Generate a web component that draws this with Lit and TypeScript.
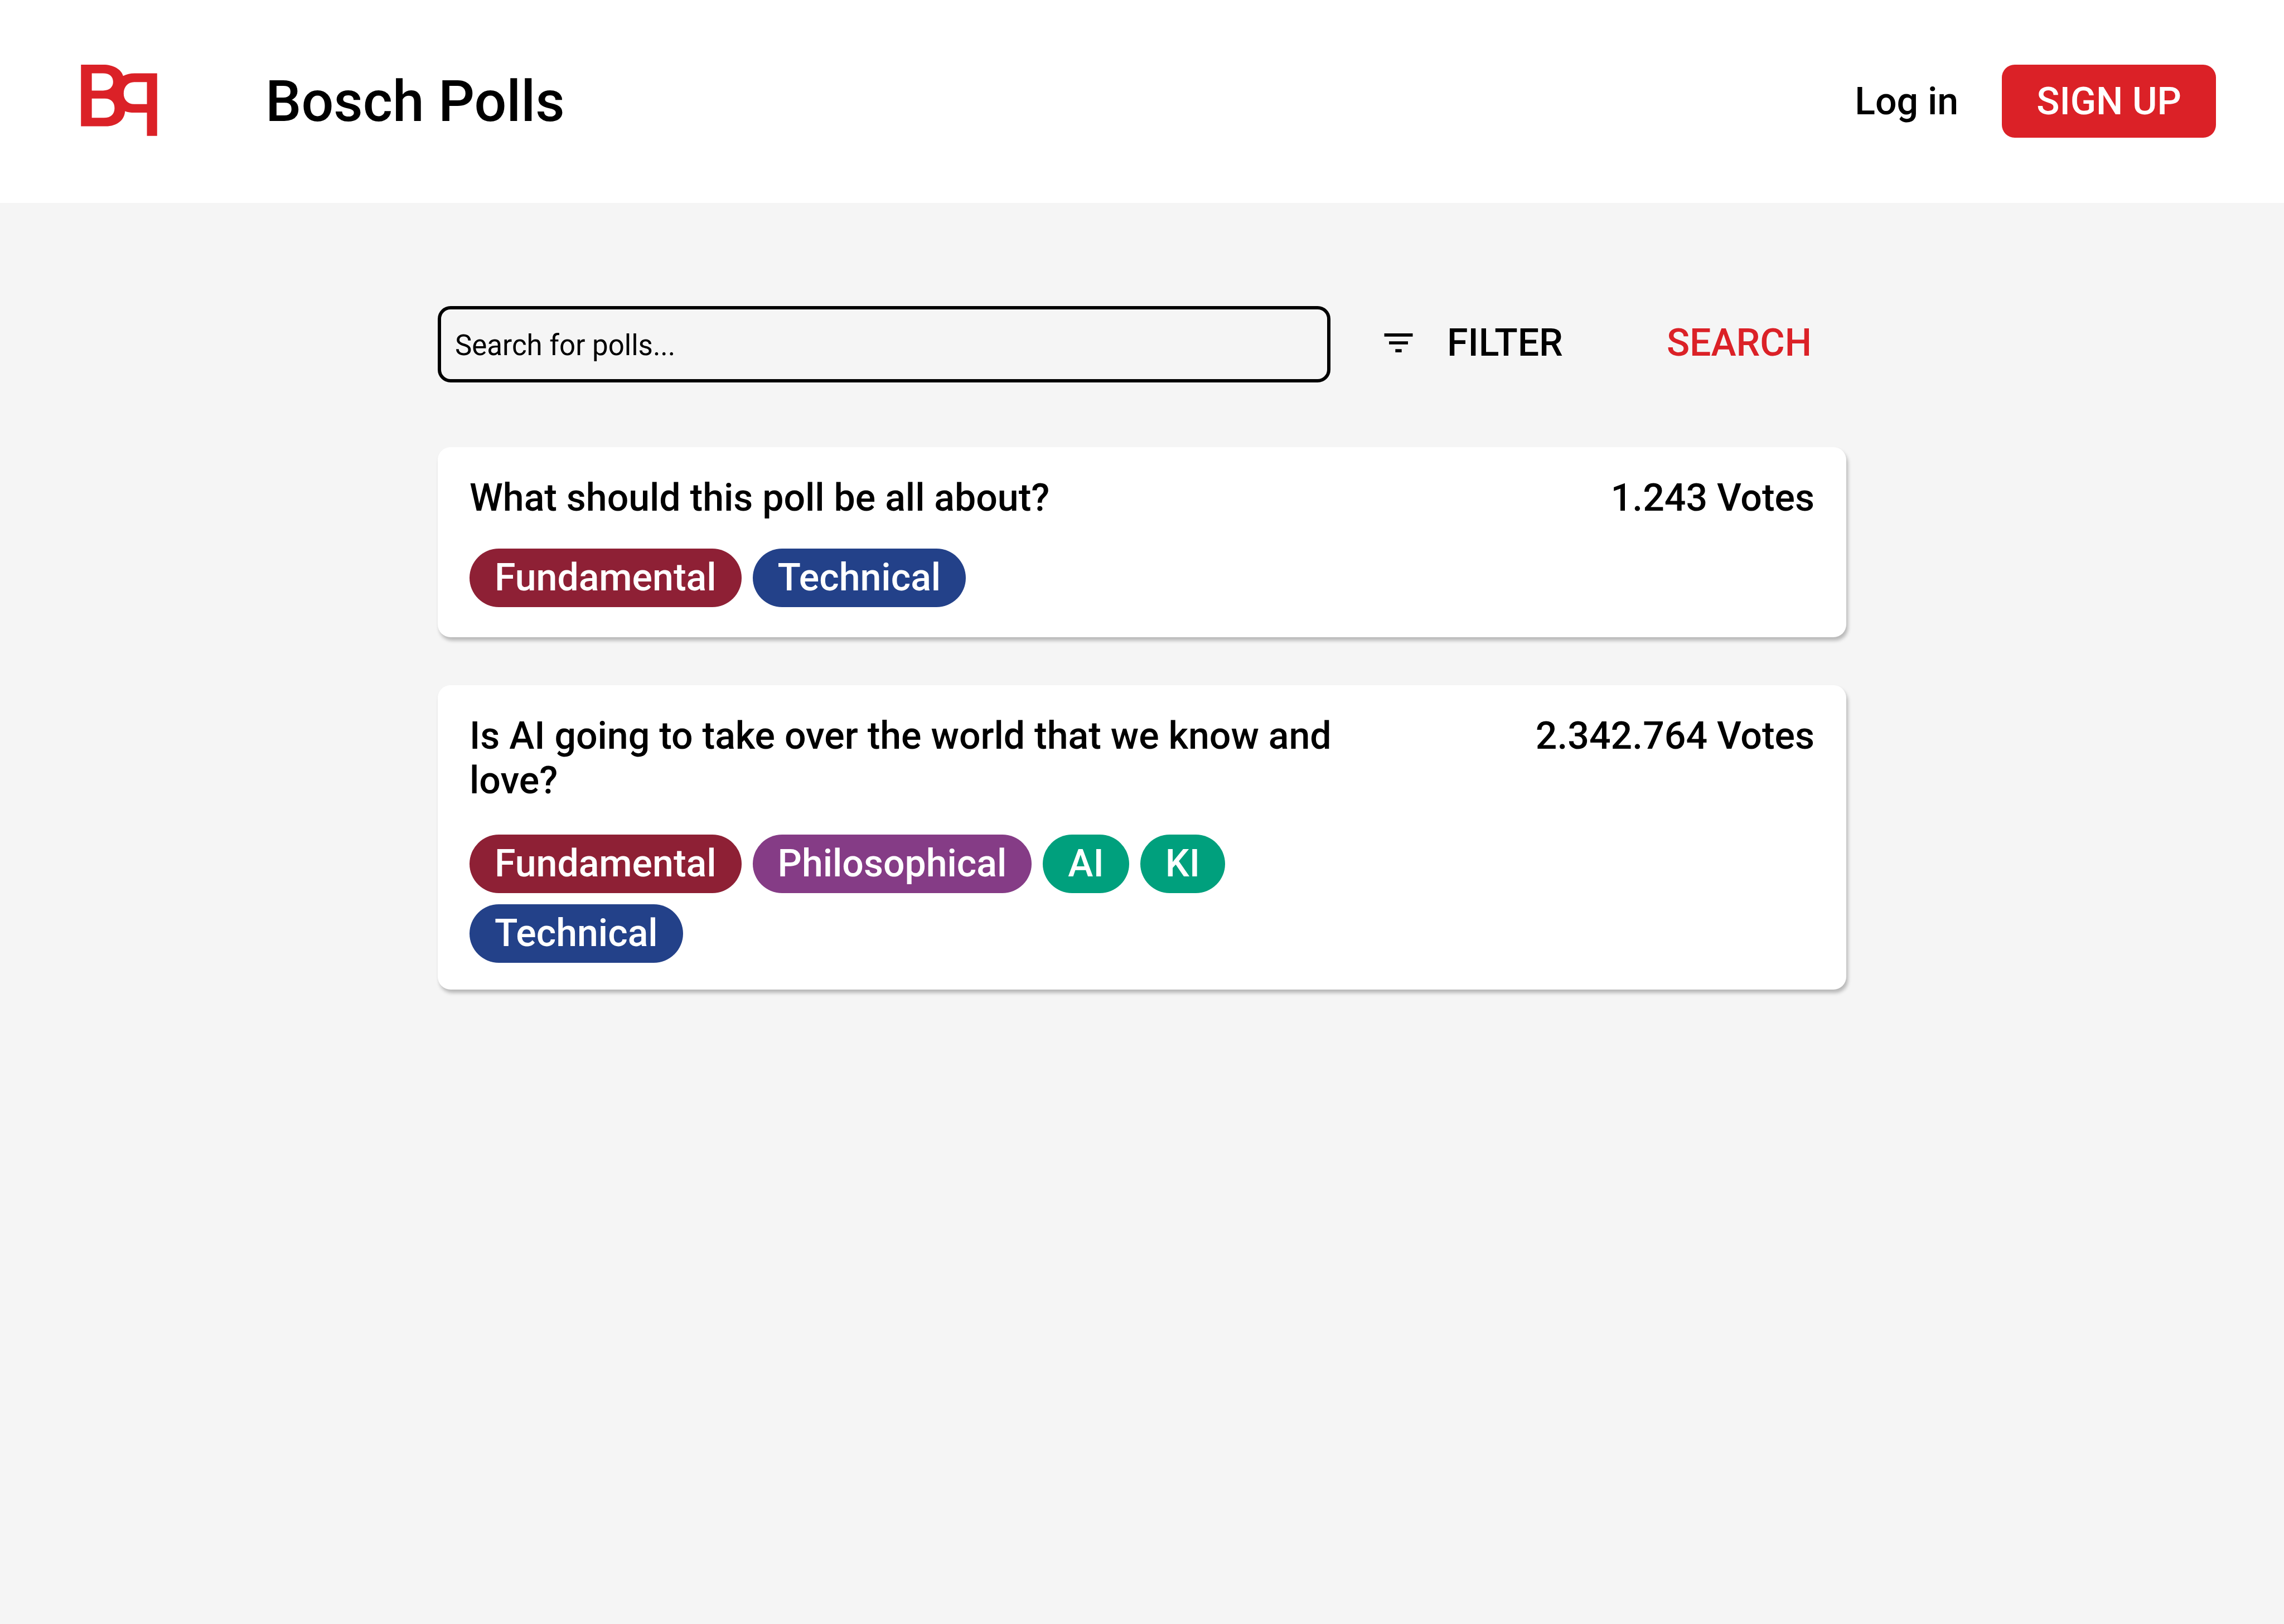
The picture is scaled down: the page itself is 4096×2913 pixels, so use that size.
import { LitElement, html, css, svg } from "lit";
import { customElement, property } from "lit/decorators.js";
import { classMap } from "lit/directives/class-map.js";

type Category = "fundamental" | "technical" | "philosophical" | "ai";

interface Tag {
  label: string;
  category: Category;
}

interface Poll {
  question: string;
  votes: string;
  tags: Tag[];
}

const POLLS: Poll[] = [
  {
    question: "What should this poll be all about?",
    votes: "1.243 Votes",
    tags: [
      { label: "Fundamental", category: "fundamental" },
      { label: "Technical", category: "technical" },
    ],
  },
  {
    question: "Is AI going to take over the world that we know and love?",
    votes: "2.342.764 Votes",
    tags: [
      { label: "Fundamental", category: "fundamental" },
      { label: "Philosophical", category: "philosophical" },
      { label: "AI", category: "ai" },
      { label: "KI", category: "ai" },
      { label: "Technical", category: "technical" },
    ],
  },
];

// Brand mark: two interlocking bowls, with the counters cut out by the even-odd rule.
const logoShape = svg`<path fill="#db2127" fill-rule="evenodd" d="
  M0 0H168C244 0 304 34 319 85C345 72 372 65 405 65H576V539H499V363H403
  C377 363 355 360 333 352C330 420 270 466 188 466H0Z
  M82 65V196H167C215 196 243 170 243 130C243 88 215 65 167 65Z
  M82 256V402H173C225 402 254 375 254 329C254 284 228 256 180 256Z
  M499 132H403C355 132 323 168 323 218C323 267 355 298 403 298H499Z"/>`;

@customElement("poll-card")
export class PollCard extends LitElement {
  static styles = css`
    :host {
      display: block;
    }
    .card {
      display: grid;
      grid-template-columns: minmax(0, 2fr) minmax(0, 1fr);
      padding: 51px 57px 54px;
      border-radius: 23px;
      background: #fff;
      box-shadow: 3px 6px 6px rgba(0, 0, 0, 0.25);
    }
    .body {
      display: flex;
      flex-direction: column;
      gap: 51px;
    }
    /* Cards whose tags run over several rows trade bottom padding for space above the tags. */
    .multirow {
      padding-bottom: 48px;
    }
    .multirow .body {
      gap: 57px;
    }
    .question,
    .votes {
      margin: 0;
      font-size: 68px;
      font-weight: 500;
      line-height: 80px;
    }
    .votes {
      text-align: right;
      white-space: nowrap;
    }
    .tags {
      display: flex;
      flex-wrap: wrap;
      gap: 20px;
      margin: 0;
      padding: 0;
      list-style: none;
    }
    .tag {
      padding: 12px 45px 13px;
      border-radius: 53px;
      color: #fff;
      font-size: 68px;
      font-weight: 500;
      line-height: 80px;
      white-space: nowrap;
    }
    .fundamental {
      background: #8e2035;
    }
    .technical {
      background: #234189;
    }
    .philosophical {
      background: #853c86;
    }
    .ai {
      background: #00a07d;
    }
  `;

  @property({ attribute: false }) poll!: Poll;

  render() {
    return html`
      <article class=${classMap({ card: true, multirow: this.poll.tags.length > 4 })}>
        <div class="body">
          <h2 class="question">${this.poll.question}</h2>
          <ul class="tags">
            ${this.poll.tags.map(
              (tag) =>
                html`<li class=${classMap({ tag: true, [tag.category]: true })}>${tag.label}</li>`,
            )}
          </ul>
        </div>
        <p class="votes">${this.poll.votes}</p>
      </article>
    `;
  }
}

@customElement("app-root")
export class AppRoot extends LitElement {
  static styles = css`
    :host {
      display: block;
      min-height: 100vh;
      background: #f5f5f5;
      color: #000;
      font-family: Roboto, "Liberation Sans", sans-serif;
    }
    .header {
      display: flex;
      align-items: center;
      padding: 116px 122px 117px 145px;
      background: #fff;
    }
    .logo {
      display: block;
      align-self: flex-start;
      flex: none;
      width: 137px;
      height: 128px;
    }
    .title {
      flex: 1;
      margin: 0 0 0 194px;
      font-size: 102px;
      font-weight: 500;
      line-height: 120px;
    }
    .account {
      display: flex;
      align-items: center;
      gap: 78px;
    }
    .login {
      color: inherit;
      font-size: 68px;
      font-weight: 500;
      line-height: 80px;
      text-decoration: none;
    }
    .button {
      display: flex;
      align-items: center;
      gap: 53px;
      height: 131px;
      margin: 0;
      padding: 0 62px;
      border: 0;
      border-radius: 23px;
      background: none;
      color: #000;
      font: 500 68px/80px Roboto, "Liberation Sans", sans-serif;
      white-space: nowrap;
      cursor: pointer;
    }
    .primary {
      background: #db2127;
      color: #fff;
    }
    .accent {
      color: #db2127;
    }
    .main {
      box-sizing: border-box;
      max-width: 2526px;
      margin: 0 auto;
      padding: 185px 0;
    }
    .search {
      display: flex;
      align-items: flex-start;
      gap: 26px;
      margin-bottom: 116px;
    }
    .field {
      flex: 1;
      box-sizing: border-box;
      min-width: 0;
      height: 137px;
      margin: 0;
      padding: 4px 25px 0;
      border: 6px solid #000;
      border-radius: 23px;
      background: transparent;
      color: #000;
      font: 400 51px/60px Roboto, "Liberation Sans", sans-serif;
      outline: none;
    }
    .field::placeholder {
      color: #000;
      opacity: 1;
    }
    .actions {
      display: flex;
      gap: 62px;
    }
    .icon {
      flex: none;
      width: 68px;
      height: 68px;
      fill: currentColor;
    }
    .polls {
      display: flex;
      flex-direction: column;
      gap: 86px;
    }
  `;

  render() {
    return html`
      <header class="header">
        <svg class="logo" viewBox="0 0 576 540" aria-hidden="true">${logoShape}</svg>
        <h1 class="title">Bosch Polls</h1>
        <nav class="account">
          <a class="login" href="#login">Log in</a>
          <button class="button primary" type="button">SIGN UP</button>
        </nav>
      </header>
      <main class="main">
        <form class="search" role="search" @submit=${(e: Event) => e.preventDefault()}>
          <input
            class="field"
            type="text"
            name="query"
            aria-label="Search for polls"
            placeholder="Search for polls..."
          />
          <div class="actions">
            <button class="button" type="button">
              <svg class="icon" viewBox="0 0 24 24" aria-hidden="true">
                <path d="M10 18h4v-2h-4v2zM3 6v2h18V6H3zm3 7h12v-2H6v2z" />
              </svg>
              FILTER
            </button>
            <button class="button accent" type="submit">SEARCH</button>
          </div>
        </form>
        <section class="polls" aria-label="Polls">
          ${POLLS.map((poll) => html`<poll-card .poll=${poll}></poll-card>`)}
        </section>
      </main>
    `;
  }
}
